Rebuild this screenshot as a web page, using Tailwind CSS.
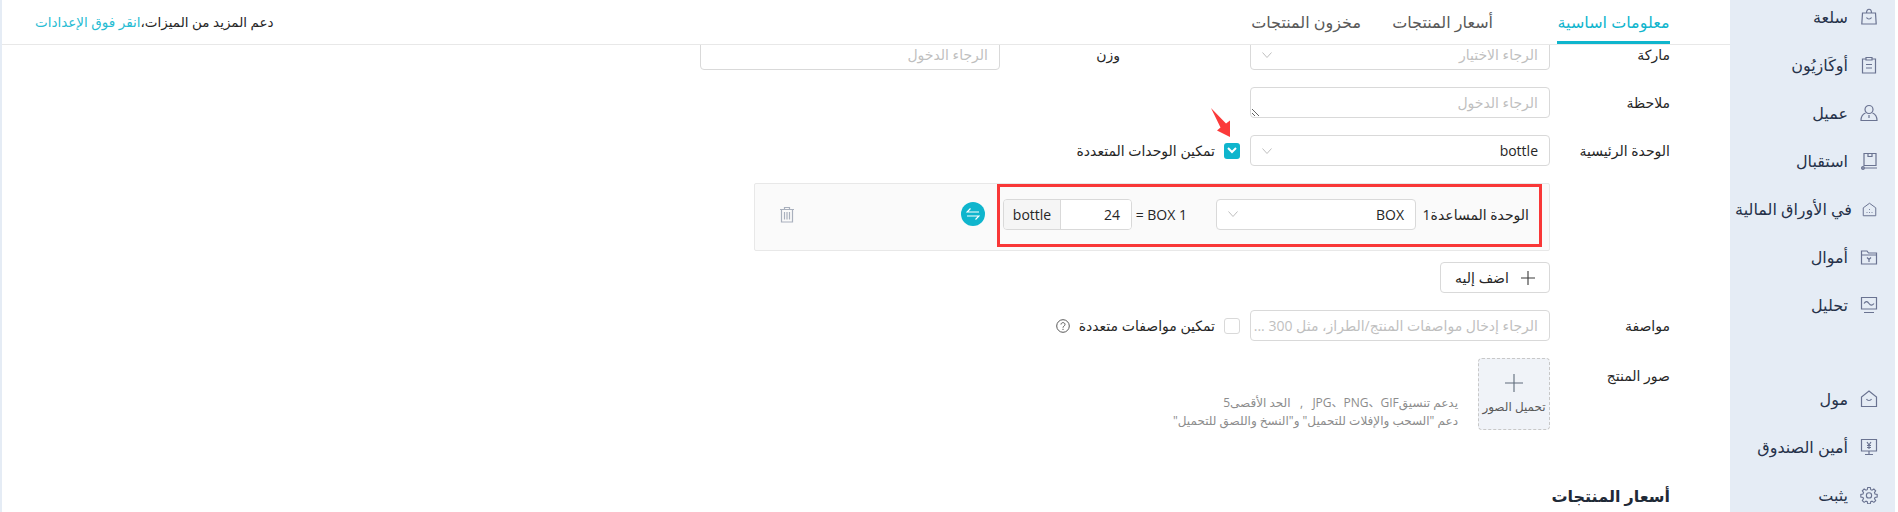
<!doctype html>
<html lang="ar" dir="rtl">
  <head>
    <meta charset="UTF-8">
    <title>معلومات اساسية</title>
    <script src="https://cdn.jsdelivr.net/npm/@tailwindcss/browser@4"></script>
  </head>
  <body class="bg-white text-[#262626] text-[14px] font-['Open_Sans','DejaVu_Sans','Noto_Sans_CJK_SC',sans-serif]">
    <div class="flex w-[1898px] h-[512px] overflow-hidden">
      <!-- Sidebar -->
      <aside class="w-[165px] mr-[3px] h-full shrink-0 bg-[#e5ecf5] text-[#26324a] text-[16px] overflow-hidden">
        <div class="-mt-[7px]">
          <div class="flex items-center h-[48px]">
            <svg class="w-[18px] h-[18px] mr-[17px] ml-[12px] shrink-0" viewBox="0 0 18 18" fill="none" stroke="#6a7391" stroke-width="1.2"><path d="M2.5 5h13l.7 11H1.8zM6.5 5c0-5 5-5 5 0M6.5 9.5c1 2 4 2 5 0"/></svg>
            <span>سلعة</span>
          </div>
          <div class="flex items-center h-[48px]">
            <svg class="w-[18px] h-[18px] mr-[17px] ml-[12px] shrink-0" viewBox="0 0 18 18" fill="none" stroke="#6a7391" stroke-width="1.2"><path d="M6 3H2.5v14h13V3H12M6 1.5h6V4H6zM6 8.5h6M6 12h6"/></svg>
            <span>أوكَازيُون</span>
          </div>
          <div class="flex items-center h-[48px]">
            <svg class="w-[18px] h-[18px] mr-[17px] ml-[12px] shrink-0" viewBox="0 0 18 18" fill="none" stroke="#6a7391" stroke-width="1.2"><circle cx="9" cy="5.5" r="4"/><path d="M5.5 9C3 10 1 12.500 1 16.500h16C17 12.500 15 10 12.500 9M9 11v3"/></svg>
            <span>عميل</span>
          </div>
          <div class="flex items-center h-[48px]">
            <svg class="w-[18px] h-[18px] mr-[17px] ml-[12px] shrink-0" viewBox="0 0 18 18" fill="none" stroke="#6a7391" stroke-width="1.2"><path d="M4 1.500h12v12H4zM4 1.500V14M1 16h16M8 1.500v3h4v-3"/><circle cx="3" cy="16" r="1.300"/></svg>
            <span>استقبال</span>
          </div>
          <div class="flex items-center h-[48px]">
            <svg class="w-[15px] h-[15px] mr-[18px] ml-[10px] shrink-0" viewBox="0 0 18 18" fill="none" stroke="#6a7391" stroke-width="1.2"><path d="M1.500 16.500V7L9 1.500 16.500 7v9.500zM6 12v1M9 12v1M12 12v1M9 8.500v1"/></svg>
            <span class="whitespace-nowrap">في الأوراق المالية</span>
          </div>
          <div class="flex items-center h-[48px]">
            <svg class="w-[18px] h-[18px] mr-[17px] ml-[12px] shrink-0" viewBox="0 0 18 18" fill="none" stroke="#6a7391" stroke-width="1.2"><path d="M1.500 3h5.500l1.500 2h8v11h-15zM1.500 7h15M7 9.500l2 2 2-2M9 11.500V14"/></svg>
            <span>أموال</span>
          </div>
          <div class="flex items-center h-[48px]">
            <svg class="w-[18px] h-[18px] mr-[17px] ml-[12px] shrink-0" viewBox="0 0 18 18" fill="none" stroke="#6a7391" stroke-width="1.2"><path d="M1.500 1.500h15v11.500h-15zM4 16.500h10M4 7.500c2-3 3.500-2 5 0s3 2.500 5 0"/></svg>
            <span>تحليل</span>
          </div>
          <div class="flex items-center h-[48px] mt-[46px]">
            <svg class="w-[18px] h-[18px] mr-[17px] ml-[12px] shrink-0" viewBox="0 0 18 18" fill="none" stroke="#6a7391" stroke-width="1.2"><path d="M1.500 16.500V7L9 1 16.500 7v9.500zM6.500 9c1 2 4 2 5 0"/></svg>
            <span>مول</span>
          </div>
          <div class="flex items-center h-[48px]">
            <svg class="w-[18px] h-[18px] mr-[17px] ml-[12px] shrink-0" viewBox="0 0 18 18" fill="none" stroke="#6a7391" stroke-width="1.2"><path d="M1.500 1.500h15v11.500h-15zM9 13v3.500M5 16.500h8M7 4l2 3 2-3M7 7.500h4M7 9.500h4M9 7v4"/></svg>
            <span>أمين الصندوق</span>
          </div>
          <div class="flex items-center h-[48px]">
            <svg class="w-[18px] h-[18px] mr-[17px] ml-[12px] shrink-0" viewBox="0 0 24 24" fill="none" stroke="#6a7391" stroke-width="1.500"><path d="M10.300 2h3.400l.6 2.900 1.700.7 2.500-1.600 2.400 2.400-1.600 2.500.7 1.700 2.900.6v3.400l-2.900.6-.7 1.700 1.600 2.500-2.400 2.400-2.500-1.600-1.700.7-.6 2.900h-3.400l-.6-2.900-1.700-.7-2.500 1.600-2.400-2.400 1.600-2.500-.7-1.700-2.900-.6v-3.400l2.900-.6.7-1.700-1.600-2.500 2.400-2.400 2.500 1.600 1.700-.7z"/><circle cx="12" cy="12.500" r="3.500"/></svg>
            <span>يثبت</span>
          </div>
        </div>
      </aside>

      <!-- Main -->
      <main class="relative flex-1 min-w-0 flex flex-col">
        <header class="flex items-center h-[45px] shrink-0 border-b border-[#e8e8e8] pr-[60px] pl-[33px] text-[16px]">
          <div class="flex items-center h-full w-[113px] justify-center border-b-[3px] border-[#0fb5cd] text-[#0fb5cd] pt-[2px] whitespace-nowrap">معلومات اساسية</div>
          <div class="mr-[64px] w-[98px] text-[#595959] whitespace-nowrap">أسعار المنتجات</div>
          <div class="mr-[34px] w-[103px] text-[#595959] whitespace-nowrap">مخزون المنتجات</div>
          <div class="mr-auto text-[13.5px] whitespace-nowrap">دعم المزيد من الميزات،<span class="text-[#27bcd3]">انقر فوق الإعدادات</span></div>
        </header>

        <div class="flex-1 min-h-0 overflow-hidden pr-[60px]">
          <div class="-mt-[6px]">
            <!-- brand / weight -->
            <div class="flex items-center h-[31px]">
              <label class="w-[120px] shrink-0">ماركة</label>
              <div class="w-[300px] h-[31px] border border-[#d9d9d9] rounded-[4px] flex items-center justify-between px-[11px] text-[#bfbfbf]">
                <span>الرجاء الاختيار</span>
                <svg class="w-[10px] h-[6px]" viewBox="0 0 10 6" fill="none" stroke="#bfbfbf"><path d="M.5.500 5 5.500 9.500.500"/></svg>
              </div>
              <label class="w-[120px] mr-[130px] shrink-0">وزن</label>
              <div class="w-[300px] h-[31px] border border-[#d9d9d9] rounded-[4px] flex items-center px-[11px] text-[#bfbfbf]">الرجاء الدخول</div>
            </div>

            <!-- remark -->
            <div class="flex items-center mt-[17px] h-[31px]">
              <label class="w-[120px] shrink-0">ملاحظة</label>
              <textarea placeholder="الرجاء الدخول" class="block w-[300px] h-[31px] border border-[#d9d9d9] rounded-[4px] px-[11px] py-[4px] placeholder:text-[#bfbfbf] outline-none"></textarea>
            </div>

            <!-- main unit -->
            <div class="flex items-center mt-[17px] h-[31px]">
              <label class="w-[120px] shrink-0">الوحدة الرئيسية</label>
              <div class="w-[300px] h-[31px] border border-[#d9d9d9] rounded-[4px] flex items-center justify-between px-[11px]">
                <span>bottle</span>
                <svg class="w-[10px] h-[6px]" viewBox="0 0 10 6" fill="none" stroke="#bfbfbf"><path d="M.5.500 5 5.500 9.500.500"/></svg>
              </div>
              <div class="relative flex items-center mr-[10px]">
                <span class="w-[16px] h-[16px] rounded-[3px] bg-[#0fb5cd] flex items-center justify-center">
                  <svg class="w-[10px] h-[7px]" viewBox="0 0 10 7" fill="none" stroke="#fff" stroke-width="2"><path d="M1 1l4 4 4-4"/></svg>
                </span>
                <span class="mr-[9px] whitespace-nowrap">تمكين الوحدات المتعددة</span>
                <!-- annotation arrow -->
                <svg class="absolute -top-[33px] right-[8px] w-[22px] h-[32px]" viewBox="0 0 22 32"><path d="M1 1 10.500 20.500 7 23.500 20 30 20 13.500 16 16.500z" fill="#fb3a3a"/></svg>
              </div>
            </div>

            <!-- auxiliary unit panel -->
            <div class="relative flex items-center mt-[17px] mr-[120px] w-[796px] h-[68px] bg-[#fafafa] border border-[#e8e8e8] rounded-[2px] pb-[6px]">
              <label class="mr-[20px] w-[113px] shrink-0 whitespace-nowrap">الوحدة المساعدة1</label>
              <div class="w-[200px] h-[31px] bg-white border border-[#d9d9d9] rounded-[4px] flex items-center justify-between px-[11px] shrink-0">
                <span>BOX</span>
                <svg class="w-[10px] h-[6px]" viewBox="0 0 10 6" fill="none" stroke="#bfbfbf"><path d="M.5.500 5 5.500 9.500.500"/></svg>
              </div>
              <span class="mr-[29px] w-[55px] shrink-0 whitespace-nowrap">1 BOX =</span>
              <div class="flex w-[129px] h-[31px] border border-[#d9d9d9] rounded-[4px] overflow-hidden shrink-0">
                <div class="w-[70px] bg-white flex items-center pr-[11px]">24</div>
                <div class="flex-1 bg-[#f5f5f5] border-r border-[#d9d9d9] flex items-center justify-center">bottle</div>
              </div>
              <span class="mr-[18px] w-[24px] h-[24px] rounded-full bg-[#0fb5cd] flex items-center justify-center shrink-0">
                <svg class="w-[14px] h-[12px]" viewBox="0 0 14 12" fill="none" stroke="#fff" stroke-width="1.200"><path d="M13 4H1l3.500-3.500M1 8h12l-3.500 3.500"/></svg>
              </span>
              <svg class="mr-[166px] w-[16px] h-[17px] shrink-0" viewBox="0 0 16 17" fill="none" stroke="#a9b0bd" stroke-width="1.200"><path d="M1 3.500h14M5.500 3.500V1.500h5v2M2.500 3.500v12.500h11V3.500M5.500 6v7.500M8 6v7.500M10.500 6v7.500"/></svg>
              <!-- annotation box -->
              <div class="absolute top-0 right-[7px] w-[545px] h-[63px] border-[3px] border-[#f93737]"></div>
            </div>

            <!-- add -->
            <div class="mt-[11px] mr-[120px] w-[110px] h-[31px] border border-[#d9d9d9] rounded-[4px] flex items-center justify-center gap-[12px]">
              <svg class="w-[14px] h-[14px]" viewBox="0 0 14 14" fill="none" stroke="#3a3a3a" stroke-width="1.100"><path d="M7 0v14M0 7h14"/></svg>
              <span>اضف إليه</span>
            </div>

            <!-- spec -->
            <div class="flex items-center mt-[17px] h-[31px]">
              <label class="w-[120px] shrink-0">مواصفة</label>
              <div class="w-[300px] h-[31px] border border-[#d9d9d9] rounded-[4px] flex items-center px-[11px] text-[#bfbfbf] whitespace-nowrap overflow-hidden">الرجاء إدخال مواصفات المنتج/الطراز، مثل 300 ...</div>
              <span class="mr-[10px] w-[16px] h-[16px] border border-[#d9d9d9] rounded-[3px] shrink-0"></span>
              <span class="mr-[9px] whitespace-nowrap">تمكين مواصفات متعددة</span>
              <svg class="mr-[9px] w-[14px] h-[14px]" viewBox="0 0 14 14" fill="none" stroke="#595959"><circle cx="7" cy="7" r="6.300"/><path d="M5 5.500C5 3 9 3 9 5.500 9 7 7 7 7 8.700M7 9.800v1.200"/></svg>
            </div>

            <!-- images -->
            <div class="flex mt-[17px] h-[72px]">
              <label class="w-[120px] shrink-0 pt-[7px]">صور المنتج</label>
              <div class="w-[72px] h-[72px] bg-[#f0f3f8] border border-dashed border-[#c8c8c8] rounded-[4px] flex flex-col items-center shrink-0">
                <svg class="w-[18px] h-[18px] mt-[15px]" viewBox="0 0 18 18" fill="none" stroke="#5f6b7a" stroke-width="1.100"><path d="M9 0v18M0 9h18"/></svg>
                <span class="text-[12px] text-[#595959] mt-[6px] whitespace-nowrap">تحميل الصور</span>
              </div>
              <div class="mr-[20px] self-end text-[12px] text-[#8c8c8c] leading-[18px] pb-[0px]">
                <div>يدعم تنسيقJPG、PNG、GIF &nbsp;&nbsp;,&nbsp;&nbsp; الحد الأقصى5</div>
                <div>دعم "السحب والإفلات للتحميل" و"النسخ واللصق للتحميل"</div>
              </div>
            </div>

            <!-- prices -->
            <div class="mt-[53px] h-[27px] text-[16px] font-bold leading-[27px] text-[#1f2a37]">أسعار المنتجات</div>
            <div class="flex mt-[3px] mr-[200px] gap-[13px]">
              <div class="w-[63px] h-[31px] bg-[#0fb5cd] rounded-[4px]"></div>
              <div class="w-[166px] h-[31px] border border-[#d9d9d9] rounded-[4px]"></div>
            </div>
          </div>
        </div>
      </main>
      <div class="w-[2px] shrink-0 bg-[#e5ecf5]"></div>
    </div>
  </body>
</html>
